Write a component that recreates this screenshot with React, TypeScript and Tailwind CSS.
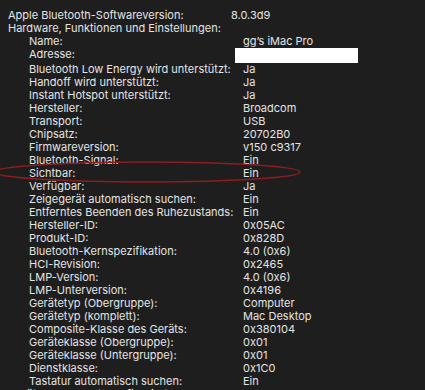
const rows: [string, string][] = [
  ['Name:', 'gg’s iMac Pro'],
  ['Adresse:', ''],
  ['Bluetooth Low Energy wird unterstützt:', 'Ja'],
  ['Handoff wird unterstützt:', 'Ja'],
  ['Instant Hotspot unterstützt:', 'Ja'],
  ['Hersteller:', 'Broadcom'],
  ['Transport:', 'USB'],
  ['Chipsatz:', '20702B0'],
  ['Firmwareversion:', 'v150 c9317'],
  ['Bluetooth-Signal:', 'Ein'],
  ['Sichtbar:', 'Ein'],
  ['Verfügbar:', 'Ja'],
  ['Zeigegerät automatisch suchen:', 'Ein'],
  ['Entferntes Beenden des Ruhezustands:', 'Ein'],
  ['Hersteller-ID:', '0x05AC'],
  ['Produkt-ID:', '0x828D'],
  ['Bluetooth-Kernspezifikation:', '4.0 (0x6)'],
  ['HCI-Revision:', '0x2465'],
  ['LMP-Version:', '4.0 (0x6)'],
  ['LMP-Unterversion:', '0x4196'],
  ['Gerätetyp (Obergruppe):', 'Computer'],
  ['Gerätetyp (komplett):', 'Mac Desktop'],
  ['Composite-Klasse des Geräts:', '0x380104'],
  ['Geräteklasse (Obergruppe):', '0x01'],
  ['Geräteklasse (Untergruppe):', '0x01'],
  ['Dienstklasse:', '0x1C0'],
  ['Tastatur automatisch suchen:', 'Ein'],
];

export default function App() {
  return (
    <div
      className="relative h-[390px] w-[425px] overflow-hidden bg-[#1e1e1e] pt-[9px] text-[11px] leading-[13px] text-[#e4e4e4]"
      style={{ fontFamily: 'Inter, "Liberation Sans", sans-serif' }}
    >
      <div className="flex pl-[8px]">
        <span className="w-[223px] shrink-0">Apple Bluetooth-Softwareversion:</span>
        <span>8.0.3d9</span>
      </div>
      <div className="pl-[8px]">Hardware, Funktionen und Einstellungen:</div>

      {rows.map(([label, value]) => (
        <div key={label} className="flex pl-[29px]">
          <span className="w-[214px] shrink-0 whitespace-nowrap">{label}</span>
          {label === 'Adresse:' ? (
            <span className="-ml-[8px] h-[15px] w-[123px] bg-white" />
          ) : (
            <span className="whitespace-nowrap">{value}</span>
          )}
        </div>
      ))}

      <div className="pl-[8px] whitespace-nowrap">Geräte (gekoppelt, konfiguriert usw.):</div>

      {/* red marker ellipse around "Sichtbar" */}
      <svg className="pointer-events-none absolute left-0 top-0" width="425" height="390">
        <ellipse cx="147" cy="172" rx="153" ry="10" fill="none" stroke="#8e1d1d" strokeWidth="1.6" />
      </svg>
    </div>
  );
}
